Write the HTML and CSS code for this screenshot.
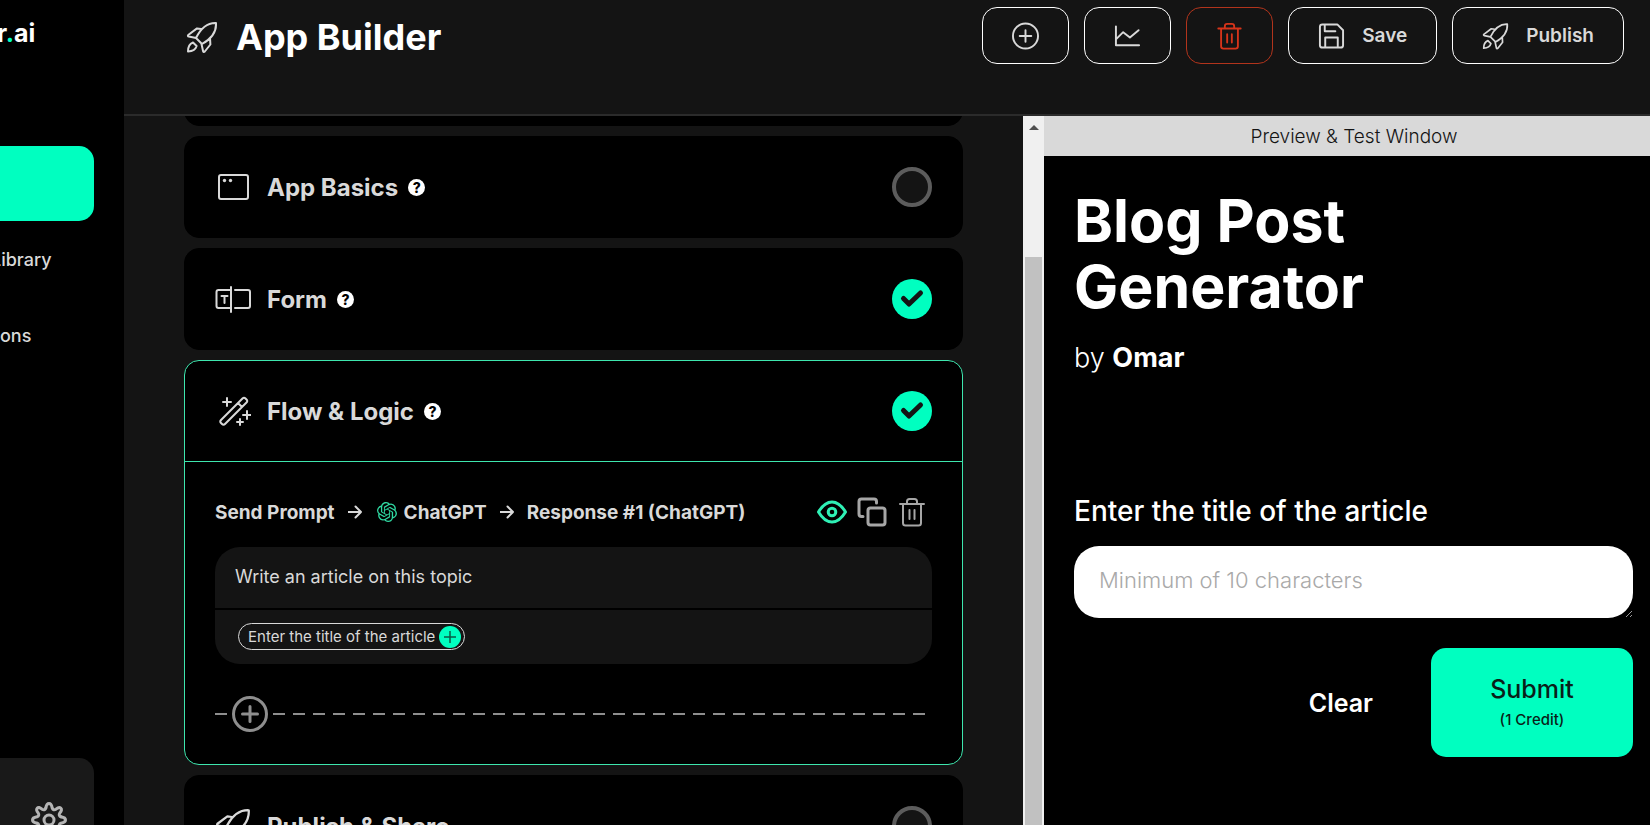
FILE: index.html
```
<!DOCTYPE html>
<html lang="en">
<head>
    <meta charset="UTF-8">
    <meta name="viewport" content="width=device-width, initial-scale=1.0">
    <title>App Builder</title>
    <link rel="stylesheet" href="styles.css">
</head>
<body>
    <!-- Shared icons -->
    <svg class="sprite" aria-hidden="true">
        <symbol id="rocket" viewBox="0 0 32 32">
            <path d="M10 17C14 9 20 1.500 30 2c.6 9-5 16-14 21zM15 8l-4-.6L2.200 14c-.6.8-.2 1.400.6 1.600L10 17M24 17l.4 6.500-5.600 7c-.8.8-1.500.5-1.700-.3L15.500 23M7 21.500C3 23 2 26 2 30.500c5-.2 7.500-1.500 8.600-5.500z"/>
        </symbol>
        <symbol id="trash" viewBox="0 0 28 30">
            <path d="M2 7h24M5 7v19q0 2.500 2.500 2.500h13q2.500 0 2.500-2.500V7M9 7V4.500Q9 2 11.500 2h5Q19 2 19 4.500V7M11.500 13v9M16.500 13v9"/>
        </symbol>
        <symbol id="plus" viewBox="0 0 36 36">
            <circle cx="18" cy="18" r="16.500"/>
            <path d="M18 10.500v15M10.500 18h15"/>
        </symbol>
        <symbol id="check" viewBox="0 0 40 40">
            <circle cx="20" cy="20" r="20" fill="#00ffc0"/>
            <path d="M11.500 19.500l5.500 5.500L28.500 14" fill="none" stroke="#141414" stroke-width="5" stroke-linecap="round" stroke-linejoin="round"/>
        </symbol>
        <symbol id="arrow" viewBox="0 0 14 14">
            <path d="M.5 7h12.500M7.500 1.500L13 7l-5.500 5.500"/>
        </symbol>
    </svg>

    <aside class="sidebar">
        <a class="logo" href="#">r<span>.</span>ai</a>
        <nav class="side-nav">
            <a class="active" href="#" aria-label="Current page"></a>
            <a class="library" href="#">Library</a>
            <a href="#">ons</a>
        </nav>
        <div class="side-bottom">
            <button type="button" aria-label="Settings">
                <svg class="icon gear" viewBox="-18 -18 36 36">
                    <g id="teeth"><path d="M-3.200-12q.7-4.500 3.200-4.500T3.200-12Q4.500-9.200 7-10.800q3-2.500 4.800-1t-1 4.800Q9.200-4.500 12-3.200"/></g>
                    <use href="#teeth" transform="rotate(90)"/>
                    <use href="#teeth" transform="rotate(180)"/>
                    <use href="#teeth" transform="rotate(270)"/>
                    <circle r="5"/>
                </svg>
            </button>
        </div>
    </aside>

    <main class="main">
        <header class="topbar">
            <h1><svg class="icon"><use href="#rocket"/></svg>App Builder</h1>
            <div class="toolbar">
                <button type="button" aria-label="Add"><svg class="icon" viewBox="0 0 28 28"><circle cx="14" cy="14" r="13"/><path d="M14 8v12M8 14h12"/></svg></button>
                <button type="button" aria-label="Statistics"><svg class="icon" viewBox="0 0 28 28"><path d="M2 4v19.500h24M2.500 17L9.500 10l7 5.500L25.500 8"/></svg></button>
                <button type="button" class="danger" aria-label="Delete"><svg class="icon"><use href="#trash"/></svg></button>
                <button type="button"><svg class="icon" viewBox="0 0 28 28"><path d="M2 4.500Q2 2 4.500 2H20l6 6v15.500q0 2.500-2.500 2.500h-19Q2 26 2 23.500zM7 2v7h11M7.500 26V15.500h13V26"/></svg>Save</button>
                <button type="button"><svg class="icon"><use href="#rocket"/></svg>Publish</button>
            </div>
        </header>

        <div class="workspace">
            <section class="builder">
                <div class="cards">
                    <div class="card"><div class="card-head"></div></div>
                    <div class="card">
                        <div class="card-head">
                            <svg class="icon" viewBox="0 0 36 36"><rect x="4" y="6" width="29" height="24" rx="2"/><circle class="dot" cx="9.500" cy="11.500" r="1.700"/><circle class="dot" cx="15.500" cy="11.500" r="1.700"/></svg>
                            <h2>App Basics</h2>
                            <span class="help">?</span>
                            <span class="status"></span>
                        </div>
                    </div>
                    <div class="card">
                        <div class="card-head">
                            <svg class="icon" viewBox="0 0 36 36"><path d="M16 9H3.500q-2 0-2 2v14q0 2 2 2H16M20 9h13q2 0 2 2v14q0 2-2 2H20M16 6v25M6.500 15h6M9.500 15v7"/></svg>
                            <h2>Form</h2>
                            <span class="help">?</span>
                            <svg class="done"><use href="#check"/></svg>
                        </div>
                    </div>
                    <div class="card open">
                        <div class="card-head">
                            <svg class="icon" viewBox="0 0 36 36"><path d="M6 27L27.500 5.500q1.500-1.500 3 0l1 1q1.500 1.500 0 3L10 31q-1.500 1.500-3 0l-1-1q-1.500-1.500 0-3zM23 10l4 4M12 5v8M8 9h8M32 18v8M28 22h8M25 26v6M22 29h6"/></svg>
                            <h2>Flow &amp; Logic</h2>
                            <span class="help">?</span>
                            <svg class="done"><use href="#check"/></svg>
                        </div>
                        <div class="card-body">
                            <div class="prompt-row">
                                <span>Send Prompt</span>
                                <svg class="icon arrow"><use href="#arrow"/></svg>
                                <span class="model">
                                    <svg viewBox="0 0 24 24"><path d="M22.2819 9.8211a5.9847 5.9847 0 0 0-.5157-4.9108 6.0462 6.0462 0 0 0-6.5098-2.9A6.0651 6.0651 0 0 0 4.9807 4.1818a5.9847 5.9847 0 0 0-3.9977 2.9 6.0462 6.0462 0 0 0 .7427 7.0966 5.98 5.98 0 0 0 .511 4.9107 6.051 6.051 0 0 0 6.5146 2.9001A5.9847 5.9847 0 0 0 13.2599 24a6.0557 6.0557 0 0 0 5.7718-4.2058 5.9894 5.9894 0 0 0 3.9977-2.9001 6.0557 6.0557 0 0 0-.7475-7.0729zm-9.022 12.6081a4.4755 4.4755 0 0 1-2.8764-1.0408l.1419-.0804 4.7783-2.7582a.7948.7948 0 0 0 .3927-.6813v-6.7369l2.02 1.1686a.071.071 0 0 1 .038.052v5.5826a4.504 4.504 0 0 1-4.4945 4.4944zm-9.6607-4.1254a4.4708 4.4708 0 0 1-.5346-3.0137l.142.0852 4.783 2.7582a.7712.7712 0 0 0 .7806 0l5.8428-3.3685v2.3324a.0804.0804 0 0 1-.0332.0615L9.74 19.9502a4.4992 4.4992 0 0 1-6.1408-1.6464zM2.3408 7.8956a4.485 4.485 0 0 1 2.3655-1.9728V11.6a.7664.7664 0 0 0 .3879.6765l5.8144 3.3543-2.0201 1.1685a.0757.0757 0 0 1-.071 0l-4.8303-2.7865A4.504 4.504 0 0 1 2.3408 7.872zm16.5963 3.8558L13.1038 8.364 15.1192 7.2a.0757.0757 0 0 1 .071 0l4.8303 2.7913a4.4944 4.4944 0 0 1-.6765 8.1042v-5.6772a.79.79 0 0 0-.407-.667zm2.0107-3.0231l-.142-.0852-4.7735-2.7818a.7759.7759 0 0 0-.7854 0L9.409 9.2297V6.8974a.0662.0662 0 0 1 .0284-.0615l4.8303-2.7866a4.4992 4.4992 0 0 1 6.6802 4.66zM8.3065 12.863l-2.02-1.1638a.0804.0804 0 0 1-.038-.0567V6.0742a4.4992 4.4992 0 0 1 7.3757-3.4537l-.142.0805L8.704 5.459a.7948.7948 0 0 0-.3927.6813zm1.0976-2.3654l2.602-1.4998 2.6069 1.4998v2.9994l-2.5974 1.4997-2.6067-1.4997z"/></svg>
                                    ChatGPT
                                </span>
                                <svg class="icon arrow"><use href="#arrow"/></svg>
                                <span>Response #1 (ChatGPT)</span>
                                <div class="row-actions">
                                    <button type="button" class="eye" aria-label="Show"><svg class="icon" viewBox="0 0 30 30"><path d="M1.500 15Q7.500 5 15 5t13.500 10Q22.500 25 15 25T1.500 15z"/><circle cx="15" cy="15" r="3.800"/></svg></button>
                                    <button type="button" class="copy" aria-label="Duplicate"><svg class="icon" viewBox="0 0 30 30"><rect x="11" y="11" width="17" height="17" rx="2.500"/><path d="M6 19.500H4.500Q2 19.500 2 17V4.500Q2 2 4.500 2H17q2.500 0 2.500 2.500V6"/></svg></button>
                                    <button type="button" aria-label="Delete"><svg class="icon"><use href="#trash"/></svg></button>
                                </div>
                            </div>
                            <div class="prompt-box">
                                <textarea rows="1" aria-label="Prompt">Write an article on this topic</textarea>
                                <div class="fields">
                                    <button type="button" class="chip">Enter the title of the article
                                        <svg viewBox="0 0 22 22"><circle cx="11" cy="11" r="11" fill="#00ffc0"/><path d="M11 5v12M5 11h12" stroke="#0b5a45" stroke-width="1.500"/></svg>
                                    </button>
                                </div>
                            </div>
                            <div class="add-step">
                                <span class="dashes first"></span>
                                <button type="button" aria-label="Add step"><svg class="icon"><use href="#plus"/></svg></button>
                                <span class="dashes"></span>
                            </div>
                        </div>
                    </div>
                    <div class="card">
                        <div class="card-head">
                            <svg class="icon"><use href="#rocket"/></svg>
                            <h2>Publish &amp; Share</h2>
                            <span class="status"></span>
                        </div>
                    </div>
                </div>
                <div class="scrollbar">
                    <svg viewBox="0 0 10 5"><path d="M0 5l5-5 5 5z"/></svg>
                    <div class="thumb"></div>
                </div>
            </section>

            <section class="preview">
                <div class="preview-head">Preview &amp; Test Window</div>
                <form class="preview-body">
                    <h2>Blog Post<br>Generator</h2>
                    <p class="author">by <b>Omar</b></p>
                    <label for="article-title">Enter the title of the article</label>
                    <textarea id="article-title" rows="1" placeholder="Minimum of 10 characters"></textarea>
                    <div class="form-actions">
                        <button type="reset" class="clear">Clear</button>
                        <button type="button" class="submit">Submit<small>(1 Credit)</small></button>
                    </div>
                </form>
            </section>
        </div>
    </main>
</body>
</html>
```
FILE: styles.css
```
* {
    box-sizing: border-box;
}

body {
    margin: 0;
    height: 100vh;
    display: flex;
    overflow: hidden;
    background-color: #141414;
    color: #fff;
    font-family: Inter, Roboto, sans-serif;
}

h1, h2, p {
    margin: 0;
}

a {
    color: inherit;
    text-decoration: none;
}

button, textarea {
    font-family: inherit;
    color: inherit;
    background: none;
    border: none;
    margin: 0;
    padding: 0;
}

button {
    cursor: pointer;
}

.sprite {
    position: absolute;
    width: 0;
    height: 0;
}

.icon {
    flex: none;
    fill: none;
    stroke: #d9d9d9;
    stroke-width: 2;
    stroke-linecap: round;
    stroke-linejoin: round;
}

/* Sidebar */
.sidebar {
    flex: none;
    width: 124px;
    display: flex;
    flex-direction: column;
    overflow: hidden;
    background-color: #000;
}

.logo {
    height: 146px;
    padding-top: 18px;
    margin-left: -3px;
    font-size: 25px;
    line-height: 30px;
    font-weight: 700;
}

.logo span {
    color: #00ffc0;
}

.side-nav {
    font-size: 18px;
    font-weight: 500;
    color: #d9d9d9;
}

.side-nav a {
    display: flex;
    align-items: center;
    height: 76px;
}

.side-nav .active {
    height: 75px;
    margin-right: 30px;
    border-radius: 0 15px 15px 0;
    background-color: #00ffc0;
}

.side-nav .library {
    margin-left: -9px;
}

.side-bottom {
    display: flex;
    justify-content: flex-end;
    height: 67px;
    margin: auto 30px 0 0;
    padding: 44px 27px 0 0;
    border-radius: 0 15px 0 0;
    background-color: #191919;
}

.gear {
    display: block;
    width: 36px;
    height: 36px;
    stroke: #b4b4b4;
    stroke-width: 3;
}

/* Top bar */
.main {
    flex: 1;
    min-width: 0;
    display: flex;
    flex-direction: column;
}

.topbar {
    flex: none;
    display: flex;
    justify-content: space-between;
    align-items: flex-start;
    height: 116px;
    padding: 7px 26px 0 62px;
    border-bottom: 2px solid #2b2b2b;
}

.topbar h1 {
    display: flex;
    align-items: center;
    gap: 18px;
    height: 60px;
    font-size: 36px;
    font-weight: 700;
}

.topbar h1 .icon {
    width: 32px;
    height: 32px;
}

.toolbar {
    display: flex;
    gap: 15px;
}

.toolbar button {
    display: flex;
    align-items: center;
    gap: 17px;
    height: 57px;
    padding: 0 29px;
    border: 1px solid #fff;
    border-radius: 15px;
    font-size: 19px;
    font-weight: 600;
    color: #d9d9d9;
}

.toolbar .icon {
    width: 27px;
    height: 28px;
}

.toolbar .danger {
    border-color: #b2341c;
}

.toolbar .danger .icon {
    stroke: #d6341a;
}

/* Builder column */
.workspace {
    flex: 1;
    min-height: 0;
    display: grid;
    grid-template-columns: 920fr 606fr;
}

.builder {
    display: flex;
    min-height: 0;
    overflow: hidden;
}

.cards {
    flex: 1;
    display: flex;
    flex-direction: column;
    gap: 10px;
    margin-top: -92px; /* list is scrolled down a little */
    padding: 0 60px;
}

.card {
    flex: none;
    border: 1px solid #000;
    border-radius: 15px;
    background-color: #000;
}

.card.open {
    border-color: #3ee6ae;
}

.card-head {
    display: flex;
    align-items: center;
    height: 100px;
    padding: 0 30px;
}

.open .card-head {
    height: 101px;
    border-bottom: 1px solid #3ee6ae;
}

.card-head .icon {
    width: 36px;
    height: 36px;
}

.card-head .dot {
    fill: #d9d9d9;
    stroke: none;
}

.card-head h2 {
    margin-left: 16px;
    font-size: 24px;
    font-weight: 700;
    color: #d9d9d9;
}

.help {
    width: 17px;
    height: 17px;
    margin-left: 10px;
    border-radius: 50%;
    background-color: #fff;
    color: #000;
    font-size: 14px;
    line-height: 17px;
    font-weight: 800;
    text-align: center;
}

.status, .done {
    width: 40px;
    height: 40px;
    margin-left: auto;
}

.status {
    border: 4px solid #5c5c5c;
    border-radius: 50%;
    background-color: #141414;
}

.card-body {
    padding: 30px 30px 32px;
}

.prompt-row {
    display: flex;
    align-items: center;
    gap: 13px;
    height: 40px;
    margin-bottom: 15px;
    font-size: 19px;
    font-weight: 700;
    color: #d9d9d9;
    white-space: nowrap;
}

.arrow {
    width: 14px;
    height: 14px;
}

.model {
    display: flex;
    align-items: center;
    gap: 7px;
    margin-left: 2px;
}

.model svg {
    width: 20px;
    height: 20px;
    fill: #2fd9a2;
}

.row-actions {
    display: flex;
    margin-left: auto;
}

.row-actions button {
    display: flex;
    align-items: center;
    justify-content: center;
    width: 40px;
    height: 40px;
}

.row-actions .icon {
    width: 30px;
    height: 30px;
    stroke: #a6a6a6;
}

.row-actions .copy .icon {
    stroke-width: 3;
}

.row-actions .eye .icon {
    stroke: #2ff0b5;
    stroke-width: 3;
}

.prompt-box {
    overflow: hidden;
    border-radius: 25px;
    background-color: #141414;
}

.prompt-box textarea {
    display: block;
    width: 100%;
    height: 63px;
    padding: 19px 20px;
    border-bottom: 2px solid #000;
    resize: none;
    outline: none;
    font-size: 18px;
    line-height: 22px;
    color: #d9d9d9;
}

.fields {
    display: flex;
    height: 54px;
    padding: 13px 23px;
}

.chip {
    display: flex;
    align-items: center;
    gap: 4px;
    height: 27px;
    padding: 0 3px 0 9px;
    border: 1px solid #d9d9d9;
    border-radius: 14px;
    font-size: 15px;
    color: #d9d9d9;
}

.chip svg {
    width: 22px;
    height: 22px;
}

.add-step {
    display: flex;
    align-items: center;
    gap: 5px;
    margin-top: 32px;
}

.add-step .icon {
    display: block;
    width: 36px;
    height: 36px;
    stroke: #8e8e8e;
    stroke-width: 3;
}

.dashes {
    flex: 1;
    height: 2px;
    background: repeating-linear-gradient(to right, #8e8e8e 0 12px, transparent 12px 20px);
}

.dashes.first {
    flex: none;
    width: 12px;
}

.scrollbar {
    flex: none;
    display: flex;
    flex-direction: column;
    align-items: center;
    width: 21px;
    padding: 9px 2px 0;
    background-color: #f0f0f0;
}

.scrollbar svg {
    flex: none;
    width: 10px;
    height: 5px;
    fill: #505050;
}

.thumb {
    flex: 1;
    width: 100%;
    margin-top: 127px;
    background-color: #c1c1c1;
}

/* Preview column */
.preview {
    overflow: hidden;
    background-color: #000;
}

.preview-head {
    height: 40px;
    padding-left: 14px;
    background-color: #d9d9d9;
    color: #141414;
    font-size: 19px;
    line-height: 41px;
    font-weight: 300;
    text-align: center;
}

.preview-body {
    padding: 32px 17px 30px 30px;
}

.preview-body h2 {
    font-size: 59px;
    line-height: 66px;
    font-weight: 700;
}

.author {
    margin: 21px 0 119px;
    font-size: 27px;
    line-height: 34px;
    font-weight: 300;
}

.author b {
    font-weight: 700;
}

.preview-body label {
    display: block;
    margin-bottom: 18px;
    font-size: 28px;
    line-height: 34px;
    font-weight: 500;
}

.preview-body textarea {
    display: block;
    width: 100%;
    height: 72px;
    padding: 19px 25px;
    border-radius: 25px;
    background-color: #fff;
    color: #000;
    resize: vertical;
    font-size: 22px;
    line-height: 30px;
    font-weight: 300;
}

.preview-body textarea::placeholder {
    color: #a9a9a9;
}

.form-actions {
    display: flex;
    justify-content: flex-end;
    gap: 58px;
    margin-top: 30px;
}

.clear {
    font-size: 25px;
    font-weight: 600;
}

.submit {
    width: 202px;
    height: 109px;
    border-radius: 15px;
    background-color: #00ffc0;
    color: #0a1f19;
    font-size: 25px;
    line-height: 34px;
    font-weight: 500;
}

.submit small {
    display: block;
    font-size: 15px;
    line-height: 28px;
}
```
